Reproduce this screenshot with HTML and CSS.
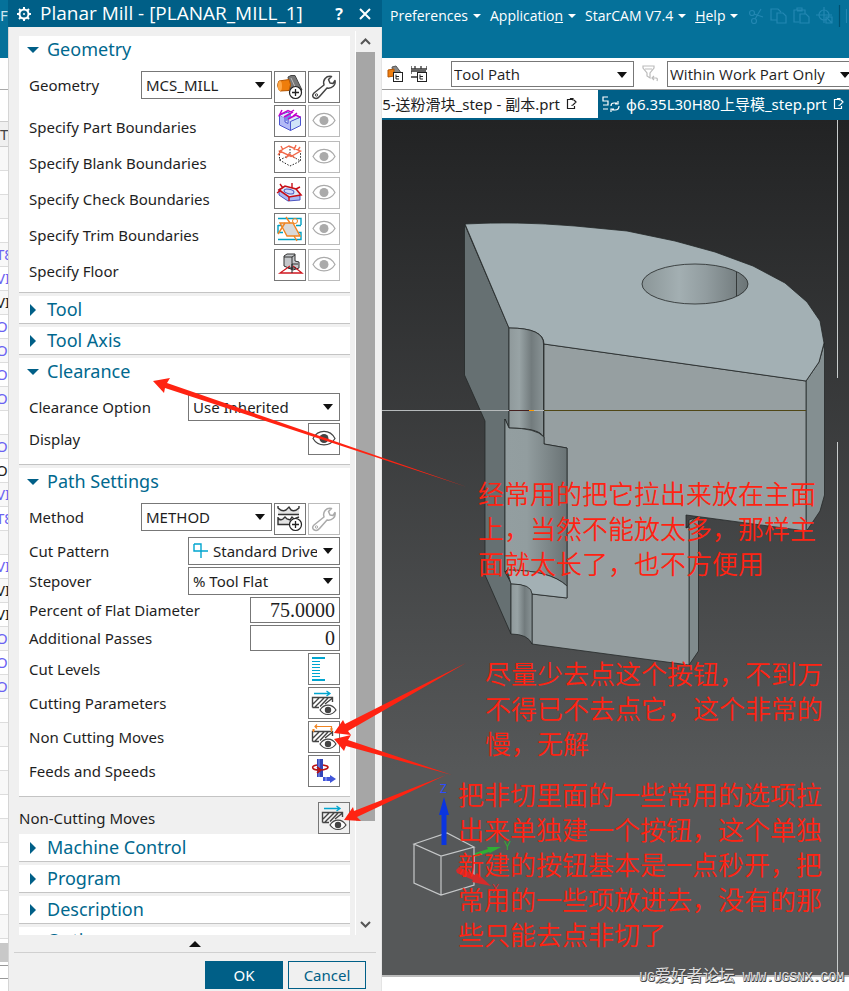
FILE: index.html
```html
<!DOCTYPE html>
<html lang="en">
<head>
    <meta charset="utf-8">
    <title>Planar Mill</title>
    <link rel="stylesheet" href="styles.css">
</head>
<body>
<svg class="defs" aria-hidden="true">
    <symbol id="eye" viewBox="0 0 32 32">
        <path d="M5 15.500C10 6 22 6 27 15.500C22 24 10 24 5 15.500z" fill="none" stroke="currentColor" stroke-width="1.200"/>
        <circle cx="16" cy="15.500" r="4.500" fill="currentColor"/>
    </symbol>
    <symbol id="wrench" viewBox="0 0 32 32">
        <path d="M6 22L16 14C14.500 9 18 4.500 23.500 5.500L20.500 8.500L22 12L25 12.500L27 9.500C28 14 24 18 19 17L11.500 25.500C8 29.500 2 26 6 22z" fill="none" stroke="currentColor" stroke-width="1.500" stroke-linejoin="round"/>
        <circle cx="8.500" cy="24" r="1.200" fill="none" stroke="currentColor"/>
    </symbol>
    <symbol id="plus" viewBox="0 0 32 32">
        <circle cx="21.500" cy="21.500" r="6" fill="#fff" stroke="#222" stroke-width="1.200"/>
        <path d="M18 21.500h7M21.500 18v7" stroke="#222" stroke-width="1.300"/>
    </symbol>
    <symbol id="cutting" viewBox="0 0 32 32">
        <path d="M4.500 20.500V10.500H24.500V15M4.500 20.500H11M5 17L11 11M7 20L16 11M12 19.500L20 11M17 17L24 11.500" fill="none" stroke="#444" stroke-width="1.400"/>
        <path d="M12 23C16 16.500 24 16.500 28 23C24 29 16 29 12 23z" fill="#fff" stroke="#444" stroke-width="1.200"/>
        <circle cx="20" cy="23" r="3.200" fill="#444"/>
    </symbol>
    <symbol id="cyan-arrow" viewBox="0 0 32 32">
        <path d="M6 6.500H22M18.500 4L22 6.500L18.500 9" fill="none" stroke="#00a5cf" stroke-width="1.300"/>
    </symbol>
    <symbol id="note-page" viewBox="0 0 12 12">
        <path d="M7 1.500H1.500V10.500H8.500V8M4.500 1.500V0.500H7V2.500M8 2L10 4L7 7L5.500 7.500" fill="none" stroke="currentColor" stroke-width="1.200"/>
    </symbol>
</svg>

<div class="app">
    <div class="navigator">
        <div class="nav-menu">Fe</div>
        <div class="nav-tools"></div>
        <div class="nav-tabs"></div>
        <div class="nav-head">T-</div>
        <ul class="nav-rows">
            <li></li><li></li><li></li><li></li>
            <li>T8</li><li>VI</li><li class="dark">VI</li><li>O</li><li>O</li><li>O</li><li>O</li>
            <li></li><li>O</li><li class="dark">O</li><li>VI</li><li>T8</li>
            <li></li><li>VI</li><li class="dark">VI</li><li class="dark">VI</li><li>O</li><li>O</li><li>O</li>
            <li></li><li></li><li></li><li></li><li></li><li></li><li></li><li></li><li></li><li></li>
        </ul>
        <div class="nav-scroll"></div>
        <div class="nav-end"></div>
    </div>

    <div class="dialog">
        <div class="dialog-title">
            <svg width="16" height="16" viewBox="0 0 16 16">
                <circle cx="8" cy="8" r="4.500" fill="none" stroke="#fff" stroke-width="2"/>
                <path d="M8 1V4M8 12V15M1 8H4M12 8H15M3 3L5 5M11 11L13 13M3 13L5 11M11 5L13 3" stroke="#fff" stroke-width="2"/>
                <circle cx="8" cy="8" r="1" fill="#fff"/>
            </svg>
            <h1>Planar Mill - [PLANAR_MILL_1]</h1>
            <button class="title-btn" aria-label="Help">?</button>
            <button class="title-btn" aria-label="Close"><svg width="12" height="12" viewBox="0 0 12 12"><path d="M1 1L11 11M11 1L1 11" stroke="#fff" stroke-width="2"/></svg></button>
        </div>

        <div class="dialog-main">
            <div class="sections">
                <section class="group geometry">
                    <h2 class="open">Geometry</h2>
                    <div class="row top">
                        <label for="geometry">Geometry</label>
                        <div class="select mid"><select id="geometry"><option>MCS_MILL</option></select></div>
                        <button class="icon" aria-label="Create geometry"><svg viewBox="0 0 32 32">
                            <path d="M14 6L17 4.500H21L28 19L23 23L16 18z" fill="#777" stroke="#444"/>
                            <path d="M17 7L23 20" stroke="#bbb"/>
                            <path d="M5 10L15 8.500Q18 13 15 19.500L6 20Q2 15 5 10z" fill="#ee7d0b" stroke="#b55500"/>
                            <ellipse cx="6" cy="15" rx="2" ry="5" fill="#ffa847"/>
                            <use href="#plus"/></svg></button>
                        <button class="icon" aria-label="Edit geometry"><svg><use href="#wrench"/></svg></button>
                    </div>
                    <div class="row low">
                        <span class="name">Specify Part Boundaries</span>
                        <button class="icon" aria-label="Specify part boundaries"><svg viewBox="0 0 32 32">
                            <path d="M5.500 10V20L16.500 25.500V16z" fill="#b3baf7" stroke="#4b55d0"/>
                            <path d="M16.500 16L26.500 12V20.500L16.500 25.500z" fill="#cfe3f8" stroke="#4b55d0"/>
                            <path d="M5.500 10L14 7L17 9L11 12V17L14 18.500V14L21 10L26.500 12L16.500 16.500" fill="#dfeafa" stroke="#4b55d0"/>
                            <path d="M11 12L17 9V13L11 17z" fill="#7b84e6"/>
                            <path d="M8 5L5.500 10L14 5.500L18 7.500L10 12M14 14L22 10L26.500 12.500M17 7L20 5M19 11L23 8" fill="none" stroke="#c400cc" stroke-width="1.500"/></svg></button>
                        <button class="icon off" disabled aria-label="Display part"><svg><use href="#eye"/></svg></button>
                    </div>
                    <div class="row low">
                        <span class="name">Specify Blank Boundaries</span>
                        <button class="icon" aria-label="Specify blank boundaries"><svg viewBox="0 0 32 32">
                            <path d="M5.500 10V19L16 25L26.500 20V11M5.500 19L16 14L26.500 20M16 5V13" fill="none" stroke="#222" stroke-dasharray="1.500 1.500"/>
                            <path d="M5.500 10L15 5L26.500 10L17 15.500zM7 5L9 9M8 9L4 14M22 4L20 9M26 6L24 9M12 17L15 13L21 17" fill="none" stroke="#f26a4b" stroke-width="1.400"/></svg></button>
                        <button class="icon off" disabled aria-label="Display blank"><svg><use href="#eye"/></svg></button>
                    </div>
                    <div class="row low">
                        <span class="name">Specify Check Boundaries</span>
                        <button class="icon" aria-label="Specify check boundaries"><svg viewBox="0 0 32 32">
                            <path d="M5 12V18L14 24L26 23V19z" fill="#a9b8f2" stroke="#4b55c0"/>
                            <path d="M5 13L11 9L22 12L27 18L15 20z" fill="#dbe9f8" stroke="#c80d16" stroke-width="1.600"/>
                            <ellipse cx="15" cy="14.500" rx="5" ry="2.200" transform="rotate(12 15 14.500)" fill="#cdd7fb" stroke="#4b55c0"/>
                            <path d="M6 7L9 11M18 6V11M22 12L26 10M3 16L7 13M15 20V24" stroke="#c80d16" stroke-width="1.400"/></svg></button>
                        <button class="icon off" disabled aria-label="Display check"><svg><use href="#eye"/></svg></button>
                    </div>
                    <div class="row low">
                        <span class="name">Specify Trim Boundaries</span>
                        <button class="icon" aria-label="Specify trim boundaries"><svg viewBox="0 0 32 32">
                            <path d="M4 5.500H27V12M4 12.500H10M4 12V19.500H9M4 26.500H27V19.500H22M22 12.500H27" fill="none" stroke="#009fc2" stroke-width="1.400"/>
                            <path d="M6 10H19L26 23H13z" fill="#d9d9d9" stroke="#f08421" stroke-width="1.400"/>
                            <path d="M12 4L16 10M11 10L4 21M20 23L23 28" stroke="#f08421" stroke-width="1.400"/>
                            <circle cx="21" cy="8" r="2.500" fill="none" stroke="#f08421"/></svg></button>
                        <button class="icon off" disabled aria-label="Display trim"><svg><use href="#eye"/></svg></button>
                    </div>
                    <div class="row low">
                        <span class="name">Specify Floor</span>
                        <button class="icon" aria-label="Specify floor"><svg viewBox="0 0 32 32">
                            <path d="M10 7L13 5H21V12L25 13V19L19 21L10 17z" fill="#c5c8cb" stroke="#333"/>
                            <path d="M10 8H18V15H24M18 8L21 6M18 15V20" fill="none" stroke="#333"/>
                            <path d="M16 17L6 24H28L19 17" fill="none" stroke="#d01820" stroke-width="1.300"/>
                            <path d="M18 15V24M14 19H22" stroke="#222"/></svg></button>
                        <button class="icon off" disabled aria-label="Display floor"><svg><use href="#eye"/></svg></button>
                    </div>
                </section>

                <section class="group"><h2>Tool</h2></section>
                <section class="group"><h2>Tool Axis</h2></section>

                <section class="group">
                    <h2 class="open">Clearance</h2>
                    <div class="row">
                        <label for="clearance">Clearance Option</label>
                        <div class="select wide"><select id="clearance"><option>Use Inherited</option></select></div>
                    </div>
                    <div class="row">
                        <span class="name">Display</span>
                        <button class="icon" aria-label="Display"><svg><use href="#eye"/></svg></button>
                    </div>
                </section>

                <section class="group">
                    <h2 class="open">Path Settings</h2>
                    <div class="row top">
                        <label for="method">Method</label>
                        <div class="select mid"><select id="method"><option>METHOD</option></select></div>
                        <button class="icon" aria-label="Create method"><svg viewBox="0 0 32 32">
                            <path d="M4 4V11H25V4Q21 10 17 6L15 4L13 6Q9 10 4 4zM4 15V21H16V16L11 14Z" fill="#e4e4e4"/>
                            <path d="M4 3V5Q8 9 12 7L15 4L17 7Q21 9 25 5V3M4 11.500H25M4 14V21.500H16M4 15Q6 18 9 16L11 14L13 16L16 17L18 14L20 16L25 14" fill="none" stroke="#333" stroke-width="1.400"/>
                            <use href="#plus"/></svg></button>
                        <button class="icon off" disabled aria-label="Edit method"><svg><use href="#wrench"/></svg></button>
                    </div>
                    <div class="row">
                        <label for="pattern">Cut Pattern</label>
                        <div class="select wide with-icon">
                            <svg width="16" height="16" viewBox="0 0 16 16"><path d="M1 1H8V15M1 1V8H15" fill="none" stroke="#00a5cf" stroke-width="1.400"/></svg>
                            <select id="pattern"><option>Standard Drive</option></select>
                        </div>
                    </div>
                    <div class="row">
                        <label for="stepover">Stepover</label>
                        <div class="select wide"><select id="stepover"><option>% Tool Flat</option></select></div>
                    </div>
                    <div class="row">
                        <label for="percent">Percent of Flat Diameter</label>
                        <input id="percent" type="text" value="75.0000">
                    </div>
                    <div class="row">
                        <label for="passes">Additional Passes</label>
                        <input id="passes" type="text" value="0">
                    </div>
                    <div class="row">
                        <span class="name">Cut Levels</span>
                        <button class="icon" aria-label="Cut levels"><svg viewBox="0 0 32 32"><path d="M4 5H17M4 27H17" stroke="#00a5cf" stroke-width="2"/><path d="M4 8.500H12M4 11.500H12M4 14.500H12M4 17.500H12M4 20.500H12M4 23.500H12" stroke="#00a5cf"/></svg></button>
                    </div>
                    <div class="row">
                        <span class="name">Cutting Parameters</span>
                        <button class="icon" aria-label="Cutting parameters"><svg viewBox="0 0 32 32"><use href="#cutting"/><use href="#cyan-arrow"/></svg></button>
                    </div>
                    <div class="row">
                        <span class="name">Non Cutting Moves</span>
                        <button class="icon" aria-label="Non cutting moves"><svg viewBox="0 0 32 32"><use href="#cutting"/><path d="M5.500 11V8M7 5.500H24M9 3.500L7 5.500L9 7.500M4 9H7M23.500 5V11M22 8H25" fill="none" stroke="#f08421" stroke-width="1.200"/></svg></button>
                    </div>
                    <div class="row">
                        <span class="name">Feeds and Speeds</span>
                        <button class="icon" aria-label="Feeds and speeds"><svg viewBox="0 0 32 32">
                            <rect x="9" y="4" width="6" height="18" fill="#3344b8"/><path d="M11 4V22" stroke="#8ea0f0"/>
                            <path d="M9 10C2 11 4 15 11 15C18 15 22 13 19 11L15 10M9 12L13 15L9 18" fill="none" stroke="#bc1111" stroke-width="1.600"/>
                            <path d="M15 22H22V20L28 24L22 28V26H15z" fill="#4055d8"/><path d="M18 22V26" stroke="#aab6ff"/></svg></button>
                    </div>
                </section>

                <div class="row loose">
                    <span class="name">Non-Cutting Moves</span>
                    <button class="icon" aria-label="Non-cutting moves"><svg viewBox="0 0 32 32"><use href="#cutting"/><use href="#cyan-arrow"/></svg></button>
                </div>

                <section class="group"><h2>Machine Control</h2></section>
                <section class="group"><h2>Program</h2></section>
                <section class="group"><h2>Description</h2></section>
                <section class="group"><h2>Options</h2></section>
            </div>
            <div class="scrollbar">
                <svg width="20" height="21" viewBox="0 0 20 21"><path d="M5 13L9.500 8.500L14 13" fill="none" stroke="#555" stroke-width="2"/></svg>
                <div class="thumb"></div>
                <svg class="down" width="20" height="21" viewBox="0 0 20 21"><path d="M5 8L9.500 12.500L14 8" fill="none" stroke="#555" stroke-width="2"/></svg>
            </div>
        </div>

        <div class="dialog-footer">
            <div class="collapse"></div>
            <div class="actions">
                <button class="btn ok">OK</button>
                <button class="btn cancel">Cancel</button>
            </div>
        </div>
    </div>

    <main class="work">
        <nav class="menu">
            <a href="#">Preferences</a>
            <a href="#"><span>Applicatio<u>n</u></span></a>
            <a href="#">StarCAM V7.4</a>
            <a href="#"><span><u>H</u>elp</span></a>
            <svg class="menu-icons" width="100" height="22" viewBox="0 0 100 22" fill="none" stroke="#2387b2" stroke-width="1.200">
                <circle cx="5" cy="8" r="2.500"/><circle cx="7" cy="16" r="2.500"/><path d="M7 9L16 12M8 14L14 4"/>
                <path d="M30 15H24V4H31L34 7M30 8H36L39 11V18H30z"/>
                <path d="M52 17H47V5H58V9M50 5V3H55V6H50M53 9H59L62 12V18H53z"/>
                <circle cx="77" cy="10" r="5"/><path d="M77 2V18M69 10H85M79 12H85V18H79zM81 14L85 18"/>
                <path d="M92.500 0V22" stroke="#005070"/><path d="M99.500 4V18"/>
            </svg>
        </nav>
        <div class="toolbar">
            <svg width="16" height="18" viewBox="0 0 16 18"><path d="M5 2L9 1L15 9L12 13L6 8z" fill="#888" stroke="#555"/><path d="M1 5L7 4V11L1 12z" fill="#ef7f10" stroke="#b55500"/><rect x="6.500" y="7.500" width="9" height="9" fill="#fff" stroke="#222"/><path d="M9 9.500V14H12M9 11.500H12" fill="none" stroke="#222"/></svg>
            <svg width="16" height="18" viewBox="0 0 16 18"><path d="M0 1V4H16V1M4 1V4M10 1V4M0 9V6H15M0 12H6" fill="none" stroke="#333" stroke-width="1.300"/><rect x="6.500" y="7.500" width="9" height="9" fill="#fff" stroke="#222"/><path d="M9 9.500V14H12M9 11.500H12" fill="none" stroke="#222"/></svg>
            <i class="divider"></i>
            <div class="select tool-path"><select aria-label="Filter"><option>Tool Path</option></select></div>
            <svg width="17" height="18" viewBox="0 0 17 18" fill="none" stroke="#bbb" stroke-width="1.200"><path d="M1 1H12V3L8 8V13L5 11V8L1 3zM3 4H10M10 13H14Q16 13 15 16M12 11L10 13L12 15"/></svg>
            <div class="select scope"><select aria-label="Scope"><option>Within Work Part Only</option></select></div>
        </div>
        <div class="tabs">
            <a href="#" class="tab first"><span>5-送粉滑块_step - 副本.prt</span><svg width="12" height="12"><use href="#note-page"/></svg></a>
            <a href="#" class="tab active">
                <svg width="18" height="16" viewBox="0 0 18 16" fill="none" stroke="#fff" stroke-width="1.200"><path d="M6 1H1V5H6V9H1M1 13H6M9 10Q9 7 12 7H15M16 5V8H13M17 10Q17 14 13 14H10M9 16V13H12"/></svg>
                <span>φ6.35L30H80上导模_step.prt</span><svg width="12" height="12"><use href="#note-page"/></svg></a>
        </div>
        <div class="viewport">
            <svg class="model" width="467" height="855" viewBox="382 120 467 855">
                <defs>
                    <linearGradient id="round"><stop offset="0" stop-color="#8f999b"/><stop offset=".3" stop-color="#98a3a5"/><stop offset=".65" stop-color="#727b7d"/><stop offset="1" stop-color="#899395"/></linearGradient>
                    <linearGradient id="pocket"><stop offset="0" stop-color="#939ea0"/><stop offset=".35" stop-color="#929d9f"/><stop offset="1" stop-color="#6a7375"/></linearGradient>
                    <linearGradient id="hole"><stop offset="0" stop-color="#8b9698"/><stop offset=".35" stop-color="#a3afb2"/><stop offset=".6" stop-color="#929da0"/><stop offset="1" stop-color="#6b7476"/></linearGradient>
                </defs>
                <path d="M837.500 120V378M837.500 442V975" stroke="#c8cccc"/>
                <g stroke="#252828" stroke-width=".8" stroke-linejoin="round">
                    <path d="M464.500 224L509 328V428L505 419V572L511 583V634L485 575V421L464.500 375z" fill="#667072"/>
                    <path d="M806 381L819 362L824.500 343V495L820 511L808 529L806 531z" fill="#848f91"/>
                    <path d="M689 520L698.500 517V651L689 665z" fill="#808b8d"/>
                    <path d="M544 344L806 381V531L686 515V528L689 527V665L532 644V594L567 598V448L544 444z" fill="#969fa1"/>
                    <path d="M465 224Q515 221 575 226L627 231L675 241L715 252L753 266L785 283L807 302L820 321L824 343L819 362L806 381L544 344Q544 328 509 328z" fill="#a3b0b4"/>
                    <path d="M509 328Q544 328 543.500 344V437Q540 428 509 428z" fill="url(#round)"/>
                    <path d="M505 419L509 428Q536 428 544 437V444L567 448V586Q550 570 507 570L505 572z" fill="url(#pocket)"/>
                    <path d="M507 570Q550 570 567 586V598L532 594Q530 584 511 584z" fill="#a3b0b4"/>
                    <path d="M511 584Q532 584 532 594V644Q528 634 511 634z" fill="url(#round)"/>
                    <ellipse cx="695" cy="284" rx="53" ry="20" fill="url(#hole)"/>
                    <path d="M736.500 272V296M686 528L696 517"/>
                </g>
                <path d="M382 410.500H509M534 410.500H544" stroke="#b5b9ba"/>
                <path d="M509 410.500H530" stroke="#452020"/>
                <path d="M529 410.500H534" stroke="#ff9c00"/>
                <path d="M544 410.500H806" stroke="#504716"/>
                <g fill="none" stroke="#c5c7c8" stroke-width="1.200">
                    <path d="M414 844L447 833L474 847L441 856zM414 844V883L441 895L474 885V847M441 856V895"/>
                </g>
                <path d="M441.500 845V815H439L444 797L449 815H446.500V845z" fill="#0a35df"/>
                <path d="M475 853L488 849L487 847L501 847L490 853L489 852L475 857z" fill="#2fae34"/>
                <path d="M456 870L459 867L475 875L477 873L491 886L472 882L473 880L457 873z" fill="#d42b2b"/>
                <text x="440" y="793" fill="#2c4cff">Z</text>
                <text x="504" y="850" fill="#2fae34">Y</text>
                <text x="492" y="893" fill="#d42b2b">X</text>
            </svg>
            <p class="note note-main">经常用的把它拉出来放在主面<br>上，当然不能放太多，那样主<br>面就太长了，也不方便用</p>
            <p class="note note-avoid">尽量少去点这个按钮，不到万<br>不得已不去点它，这个非常的<br>慢，无解</p>
            <p class="note note-button">把非切里面的一些常用的选项拉<br>出来单独建一个按钮，这个单独<br>新建的按钮基本是一点秒开，把<br>常用的一些项放进去，没有的那<br>些只能去点非切了</p>
        </div>
        <div class="status"></div>
    </main>

    <svg class="arrows" width="849" height="991" viewBox="0 0 849 991" fill="#ff2312">
        <path d="M153 381L170 378L167 383L467 487L165 388L164 393z"/>
        <path d="M334 733L343 720L345 724L466 663L348 731L351 735z"/>
        <path d="M334 739L351 735L348 740L452 775L346 746L344 751z"/>
        <path d="M344 820L353 807L354 811L446 775L357 817L361 821z"/>
    </svg>
    <div class="watermark">UG<span>爱好者论坛</span> WWW.UGSNX.COM</div>
</div>
</body>
</html>
```
FILE: styles.css
```css
*{
    box-sizing: border-box;
}
body{
    margin: 0;
    font-family: "Noto Sans", "Noto Sans CJK SC", sans-serif;
    font-size: 15px;
    color: #1e1e1e;
    background: #fff;
}
a{
    text-decoration: none;
    color: inherit;
}
button, select, input{
    font: inherit;
    color: inherit;
    margin: 0;
    padding: 0;
}
.defs{
    display: none;
}
.app{
    position: relative;
    display: flex;
    height: 100vh;
    min-height: 991px;
    overflow: hidden;
}

/* left list, mostly behind the dialog */
.navigator{
    width: 8px;
    display: flex;
    flex-direction: column;
    overflow: hidden;
    color: #6b62f2;
}
.nav-menu{
    height: 58px;
    line-height: 30px;
    background: #05719a;
    color: #cfe6f0;
}
.nav-tools{
    height: 32px;
    border-bottom: 1px solid #aaa;
}
.nav-tabs{
    height: 32px;
    border-bottom: 1px solid #ccc;
}
.nav-head{
    height: 25px;
    line-height: 25px;
    background: #f0f0f0;
    border-bottom: 1px solid #ccc;
    color: #444;
}
.nav-rows{
    list-style: none;
    margin: 0;
    padding: 0;
}
.nav-rows li{
    height: 24px;
    line-height: 23px;
    border-bottom: 1px solid #ddd;
    text-indent: -4px;
    white-space: nowrap;
}
.nav-rows li:nth-child(odd){
    background: #f8f8f8;
}
.nav-rows .dark{
    color: #222;
}
.nav-scroll{
    height: 23px;
    border-top: 4px solid #fff;
    background: #c8c8c8;
}
.nav-end{
    height: 14px;
    margin-top: 3px;
    border-top: 1px solid #999;
    border-bottom: 1px solid #999;
}

/* dialog */
.dialog{
    width: 374px;
    display: flex;
    flex-direction: column;
    background: #f0f0f0;
    border-left: 1px solid #d5d5d5;
    border-right: 1px solid #e4e4e4;
}
.dialog-title{
    height: 27px;
    display: flex;
    align-items: center;
    gap: 8px;
    padding: 0 8px;
    margin: 0 -1px;
    background: #005f87;
    color: #fff;
}
.dialog-title h1{
    flex: 1;
    margin: 0;
    font-family: "Open Sans", sans-serif;
    font-size: 19px;
    font-weight: normal;
    line-height: 27px;
    white-space: nowrap;
}
.title-btn{
    width: 18px;
    border: 0;
    background: none;
    color: #fff;
    font-weight: bold;
    font-size: 16px;
    line-height: 24px;
}
.dialog-main{
    flex: 1;
    min-height: 0;
    display: flex;
    gap: 5px;
    padding-left: 10px;
    padding-right: 6px;
}
.sections{
    flex: 1;
    padding-top: 9px;
    overflow: hidden;
}
.group{
    background: #fff;
    border-bottom: 1px solid #c4c4c4;
    margin-bottom: 3px;
    padding: 0 10px;
}
.group h2{
    display: flex;
    align-items: center;
    gap: 10px;
    margin: 0;
    padding-left: 1px;
    height: 27px;
    font-size: 18px;
    line-height: 29px;
    font-weight: normal;
    color: #00688e;
}
.group h2:before{
    content: '';
    border-left: 6px solid #005f87;
    border-top: 6px solid transparent;
    border-bottom: 6px solid transparent;
    margin-right: 1px;
}
.group h2.open{
    padding-left: 0;
    margin-bottom: 8px;
    margin-left: -2px;
}
.group h2.open:before{
    border-top: 6px solid #005f87;
    border-left: 6px solid transparent;
    border-right: 6px solid transparent;
    border-bottom: 0;
    margin-right: -2px;
}
.group:has(.row){
    padding-bottom: 9px;
}
.group.geometry{
    padding-bottom: 7px;
}
.row{
    display: flex;
    align-items: center;
    gap: 2px;
    margin-bottom: 2px;
    white-space: nowrap;
}
.row:last-child{
    margin-bottom: 0;
}
.row label, .row .name{
    flex: 1;
    line-height: 26px;
}
.row.top{
    align-items: flex-start;
}
.row.top label{
    line-height: 28px;
}
.row.low{
    height: 36px;
    align-items: flex-start;
    margin: 0;
}
.row.low .name{
    align-self: flex-end;
    line-height: 28px;
}
.row.loose{
    margin: 0;
    margin-top: -3px;
    padding-top: 5px;
}
.icon{
    width: 32px;
    height: 32px;
    border: 1px solid #777;
    background: transparent;
    color: #444;
}
.icon svg{
    display: block;
    width: 32px;
    height: 32px;
    margin: -1px;
}
.icon.off{
    border-color: #bbb;
    color: #aaa;
}
.select{
    position: relative;
    display: flex;
    align-items: center;
    height: 28px;
    padding-right: 22px;
    border: 1px solid #777;
    background: #fff;
}
.select:after{
    content: '';
    position: absolute;
    right: 6px;
    top: 10px;
    border-top: 6px solid #111;
    border-left: 5px solid transparent;
    border-right: 5px solid transparent;
    pointer-events: none;
}
.select select{
    flex: 1;
    min-width: 0;
    height: 26px;
    padding-left: 4px;
    border: 0;
    background: none;
    appearance: none;
    overflow: hidden;
    text-overflow: clip;
}
.select.mid{
    width: 131px;
}
.select.wide{
    width: 152px;
}
.with-icon{
    padding-left: 4px;
}
.row input{
    width: 90px;
    height: 26px;
    padding: 0 4px;
    border: 1px solid #777;
    background: #fff;
    font-family: "Liberation Serif", serif;
    font-size: 20px;
    text-align: right;
}
.scrollbar{
    width: 20px;
    margin-top: 4px;
    display: flex;
    flex-direction: column;
    border-left: 1px solid #fff;
}
.thumb{
    height: 769px;
    background: #a6a6a6;
}
.scrollbar .down{
    margin-top: auto;
}
.dialog-footer{
    height: 56px;
    padding: 0 5px;
}
.collapse{
    height: 18px;
    padding-top: 6px;
    border-bottom: 1px solid #d0d0d0;
}
.collapse:before{
    content: '';
    display: block;
    width: 0;
    margin: 0 auto;
    border-bottom: 6px solid #111;
    border-left: 6px solid transparent;
    border-right: 6px solid transparent;
}
.actions{
    display: flex;
    justify-content: flex-end;
    gap: 5px;
    padding: 8px 10px 0 0;
}
.btn{
    width: 78px;
    height: 28px;
    border: 1px solid #005f87;
    background: #f0f0f0;
    color: #005f87;
}
.btn.ok{
    background: #005f87;
    color: #fff;
}

/* main window */
.work{
    flex: 1;
    min-width: 0;
    display: flex;
    flex-direction: column;
}
.menu{
    height: 58px;
    display: flex;
    align-items: flex-start;
    padding: 5px 0 0 8px;
    background: #05719a;
    color: #fff;
    font-family: "Open Sans", sans-serif;
    font-size: 14px;
    line-height: 22px;
    white-space: nowrap;
    overflow: hidden;
}
.menu a{
    display: flex;
    align-items: center;
    margin-right: 9px;
}
.menu a:after{
    content: '';
    margin-left: 5px;
    border-top: 4px solid #fff;
    border-left: 4px solid transparent;
    border-right: 4px solid transparent;
}
.menu-icons{
    flex: none;
}
.toolbar{
    height: 32px;
    display: flex;
    align-items: center;
    gap: 8px;
    padding-left: 5px;
    border-bottom: 1px solid #999;
    background: #fff;
    font-family: "Open Sans", sans-serif;
    overflow: hidden;
}
.toolbar svg, .toolbar .select{
    flex: none;
}
.divider{
    width: 1px;
    height: 24px;
    margin: 0 4px;
    background: #ddd;
}
.toolbar .select{
    height: 26px;
}
.toolbar select{
    height: 24px;
    padding-left: 2px;
}
.tool-path{
    width: 183px;
}
.scope{
    width: 190px;
}
.tabs{
    height: 30px;
    display: flex;
    border-bottom: 2px solid #005f87;
    white-space: nowrap;
    overflow: hidden;
}
.tab{
    display: flex;
    align-items: center;
    gap: 6px;
    line-height: 28px;
}
.tab svg{
    flex: none;
}
.tab.first{
    width: 216px;
    justify-content: flex-end;
    padding-right: 20px;
    overflow: hidden;
}
.tab.active{
    flex: 1;
    padding-left: 4px;
    background: #005f87;
    color: #fff;
}
.viewport{
    position: relative;
    flex: 1;
    overflow: hidden;
    background: linear-gradient(#222324, #565859 76%);
}
.model{
    position: absolute;
    left: 0;
    top: 0;
    font-size: 12px;
}
.note{
    position: absolute;
    margin: 0;
    font-family: "Noto Sans CJK SC", sans-serif;
    font-size: 26px;
    font-weight: 350;
    line-height: 35px;
    white-space: nowrap;
    color: #ff2312;
}
.note-main{
    left: 96px;
    top: 355px;
}
.note-avoid{
    left: 103px;
    top: 535px;
}
.note-button{
    left: 76px;
    top: 656px;
}
.status{
    height: 16px;
    border-top: 2px solid #bbb;
    background: #fff;
}
.arrows{
    position: absolute;
    left: 0;
    top: 0;
    pointer-events: none;
}
.watermark{
    position: absolute;
    right: 5px;
    bottom: 1px;
    font-family: "Liberation Mono", monospace;
    font-size: 13px;
    line-height: 24px;
    color: #ddd;
    text-shadow: 1px 1px 0 #444, 0 1px 0 #444;
}
.watermark span{
    font-family: "Noto Sans CJK SC", sans-serif;
    font-size: 16px;
}
```
